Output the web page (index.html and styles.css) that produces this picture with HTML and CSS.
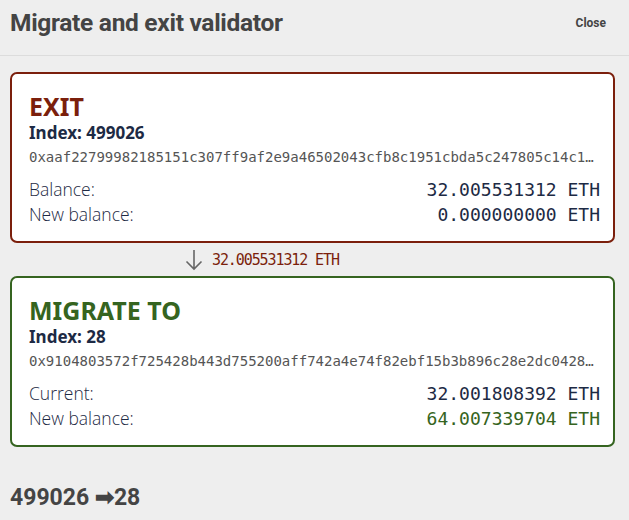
FILE: index.html
```html
<!DOCTYPE html>
<html lang="en">
<head>
    <meta charset="UTF-8">
    <meta name="viewport" content="width=device-width, initial-scale=1.0">
    <title>Migrate and exit validator</title>
    <link rel="stylesheet" href="styles.css">
</head>
<body>
    <div class="modal">
        <div class="modal-header">
            <h1>Migrate and exit validator</h1>
            <button class="close-btn">Close</button>
        </div>

        <div class="modal-body">
            <div class="card card-exit">
                <div class="card-title">EXIT</div>
                <div class="card-index">Index: 499026</div>
                <div class="card-pubkey">0xaaf22799982185151c307ff9af2e9a46502043cfb8c1951cbda5c247805c14c1e0d47b1a6f3c2e98d4b7a0c19e2f3d5a</div>
                <div class="card-rows">
                    <div class="row">
                        <span class="label">Balance:</span>
                        <span class="value">32.005531312 ETH</span>
                    </div>
                    <div class="row">
                        <span class="label">New balance:</span>
                        <span class="value">0.000000000 ETH</span>
                    </div>
                </div>
            </div>

            <div class="transfer">
                <svg class="transfer-arrow" width="18" height="22" viewBox="0 0 18 22">
                    <path d="M9 1 V20 M1.5 12.5 L9 20 L16.5 12.5" fill="none" stroke="#666" stroke-width="1.6"/>
                </svg>
                <span class="transfer-amount">32.005531312 ETH</span>
            </div>

            <div class="card card-migrate">
                <div class="card-title">MIGRATE TO</div>
                <div class="card-index">Index: 28</div>
                <div class="card-pubkey">0x9104803572f725428b443d755200aff742a4e74f82ebf15b3b896c28e2dc04281c7d3a9e5f0b6d2c48e1a7f39b0c5d2e</div>
                <div class="card-rows">
                    <div class="row">
                        <span class="label">Current:</span>
                        <span class="value">32.001808392 ETH</span>
                    </div>
                    <div class="row">
                        <span class="label">New balance:</span>
                        <span class="value value-gain">64.007339704 ETH</span>
                    </div>
                </div>
            </div>

            <div class="summary">499026 ➡28</div>
        </div>
    </div>
</body>
</html>
```

FILE: styles.css
```css
body {
    margin: 0;
    background-color: #eeeeee;
    font-family: "Noto Sans", sans-serif;
}

.modal {
    width: 629px;
}

.modal-header {
    display: flex;
    justify-content: space-between;
    align-items: center;
    height: 55px;
    padding: 0 10px 0 10px;
    border-bottom: 1px solid #dcdcdc;
}

.modal-header h1 {
    margin: 0;
    font-family: Roboto, sans-serif;
    font-size: 24.5px;
    font-weight: 700;
    color: #444444;
    letter-spacing: -0.3px;
    position: relative;
    top: -5px;
}

.close-btn {
    background: none;
    border: none;
    font-family: Roboto, sans-serif;
    font-size: 12px;
    font-weight: 700;
    color: #444444;
    padding: 0 13px 0 0;
    position: relative;
    top: -5px;
}

.modal-body {
    padding: 16px 14px 0 10px;
}

.card {
    background-color: #ffffff;
    border: 2px solid;
    border-radius: 7px;
    padding: 17px 13px 14px 17px;
}

.card-exit {
    border-color: #7b1f0c;
}

.card-migrate {
    border-color: #356420;
}

.card-title {
    font-size: 25px;
    font-weight: 700;
    line-height: 30px;
}

.card-exit .card-title {
    color: #7b1f0c;
}

.card-migrate .card-title {
    color: #356420;
}

.card-index {
    font-size: 17px;
    font-weight: 700;
    color: #1d2a44;
    line-height: 24px;
}

.card-pubkey {
    font-family: "DejaVu Sans Mono", monospace;
    font-size: 14px;
    color: #555555;
    line-height: 24px;
    white-space: nowrap;
    overflow: hidden;
    text-overflow: ellipsis;
}

.card-rows {
    margin-top: 8px;
}

.row {
    display: flex;
    justify-content: space-between;
    align-items: baseline;
    line-height: 24px;
}

.label {
    font-family: "Open Sans", sans-serif;
    font-weight: 300;
    font-size: 17.5px;
    color: #1d2a44;
}

.value {
    font-family: "DejaVu Sans Mono", monospace;
    font-size: 18px;
    color: #1d2a44;
}

.value-gain {
    color: #356420;
}

.transfer {
    display: flex;
    align-items: center;
    gap: 9px;
    height: 33px;
    padding-left: 175px;
}

.transfer-amount {
    font-family: "DejaVu Sans Mono", monospace;
    font-size: 15px;
    letter-spacing: -1.1px;
    color: #7b1f0c;
}

.summary {
    margin-top: 37px;
    font-family: Roboto, sans-serif;
    font-size: 23px;
    font-weight: 700;
    color: #444444;
}
```
